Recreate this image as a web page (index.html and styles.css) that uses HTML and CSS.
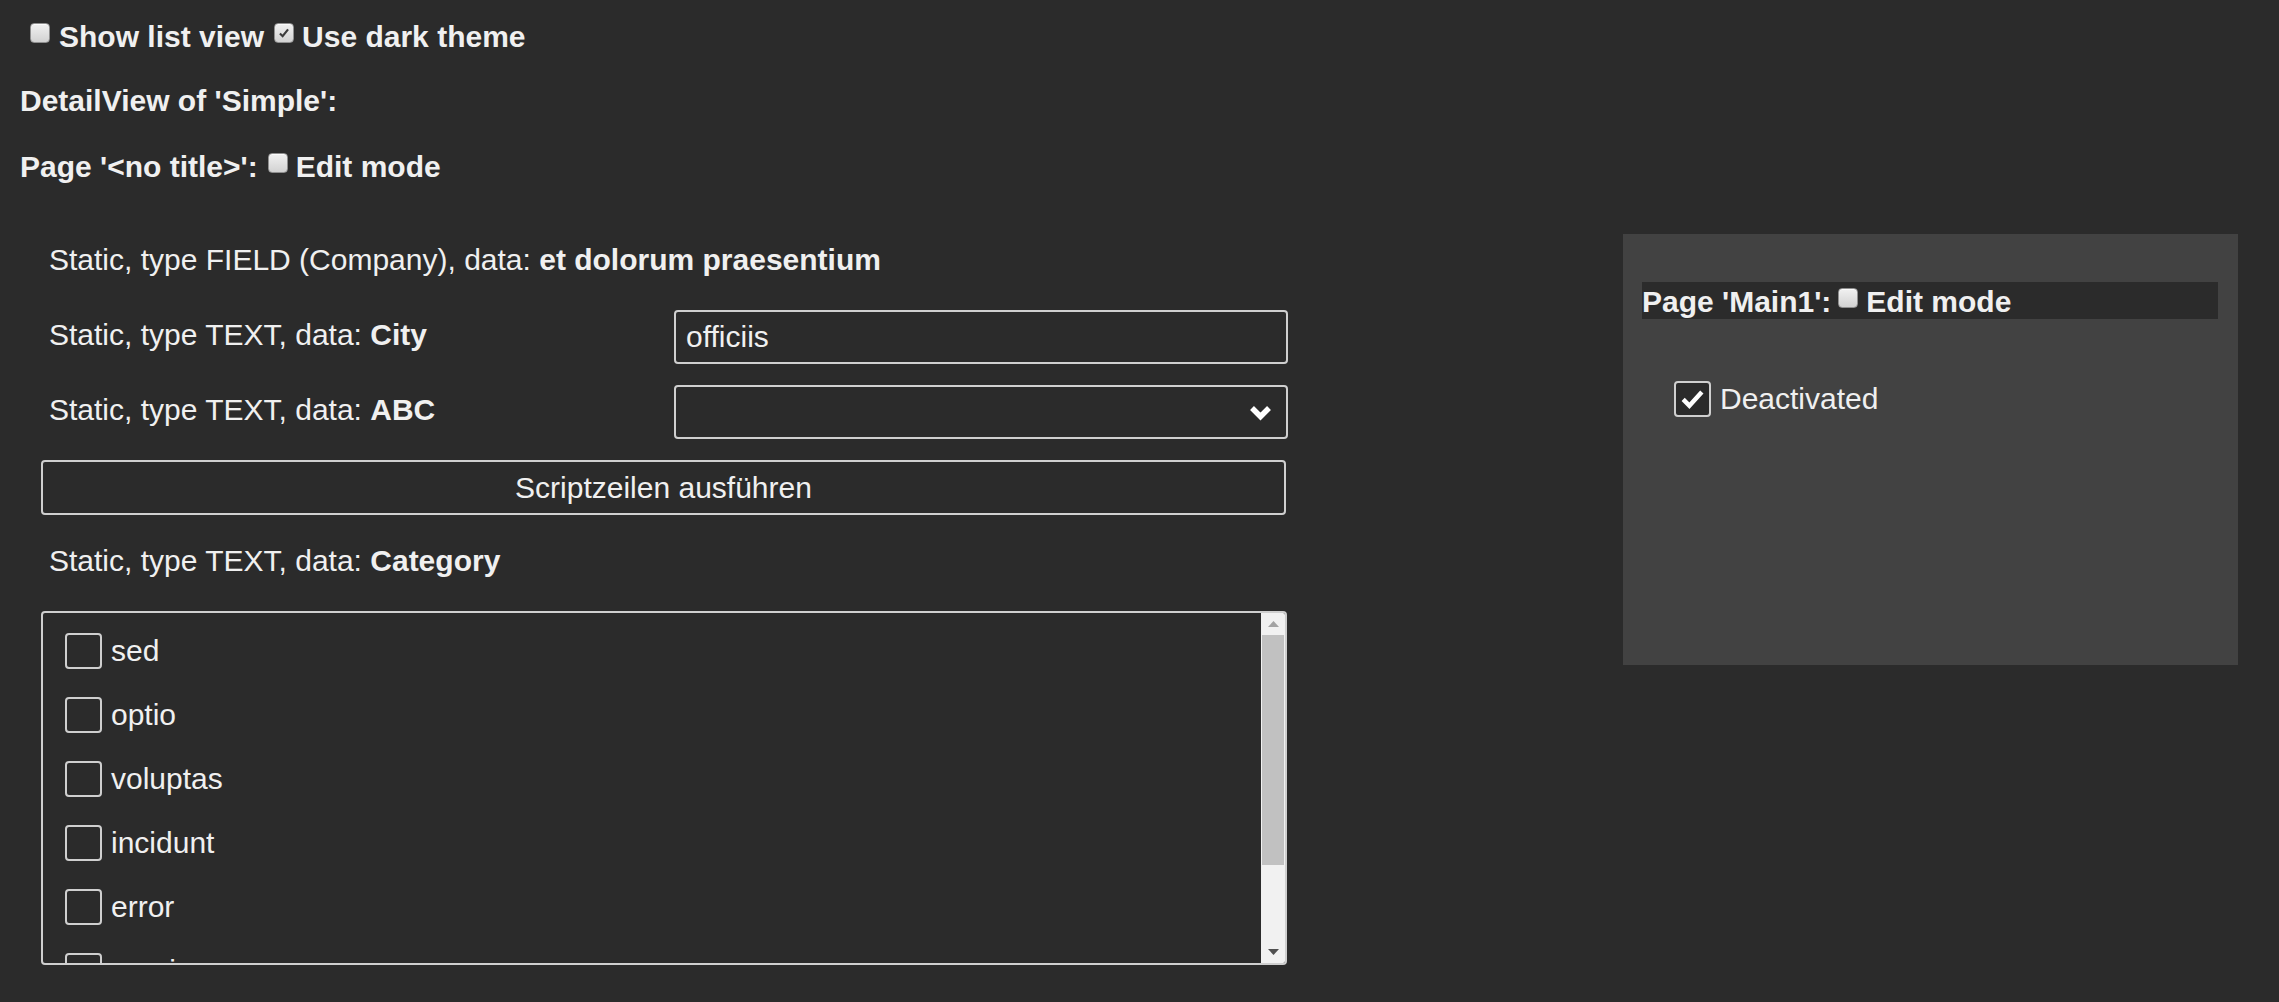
FILE: index.html
```html
<!DOCTYPE html>
<html lang="de">
<head>
<meta charset="utf-8">
<title>DetailView</title>
<link rel="stylesheet" href="styles.css">
</head>
<body>
<div class="toolbar">
  <label class="opt first"><span class="ncb"></span>Show list view</label><label class="opt second"><span class="ncb"><svg class="ncheck" viewBox="0 0 20 20"><path d="M5.5 10.5 L8.5 13.5 L14.5 6" /></svg></span>Use dark theme</label>
</div>
<h1 class="title">DetailView of 'Simple':</h1>
<h2 class="pagehead">Page '&lt;no title&gt;':<label class="opt inhead"><span class="ncb"></span>Edit mode</label></h2>

<div class="main">
  <div class="detail">
    <div class="row">
      <div class="lbl span">Static, type FIELD (Company), data: <b>et dolorum praesentium</b></div>
    </div>
    <div class="row">
      <div class="lbl">Static, type TEXT, data: <b>City</b></div>
      <input class="textin" type="text" value="officiis">
    </div>
    <div class="row">
      <div class="lbl">Static, type TEXT, data: <b>ABC</b></div>
      <div class="select">
        <svg class="chev" viewBox="0 0 23 17"><path d="M3 4 L11.5 12.5 L20 4" /></svg>
      </div>
    </div>
    <button class="runbtn" type="button">Scriptzeilen ausführen</button>
    <div class="row">
      <div class="lbl">Static, type TEXT, data: <b>Category</b></div>
    </div>
    <div class="listbox">
      <div class="items">
        <div class="item"><span class="lcb"></span>sed</div>
        <div class="item"><span class="lcb"></span>optio</div>
        <div class="item"><span class="lcb"></span>voluptas</div>
        <div class="item"><span class="lcb"></span>incidunt</div>
        <div class="item"><span class="lcb"></span>error</div>
        <div class="item"><span class="lcb"></span>omnis</div>
        <div class="item"><span class="lcb"></span>quia</div>
      </div>
      <div class="sbar">
        <div class="sbtn"><svg class="arrow" viewBox="0 0 11 6"><polygon points="0,6 5.5,0 11,6" fill="#a3a3a3"/></svg></div>
        <div class="thumb"></div>
        <div class="strack"></div>
        <div class="sbtn"><svg class="arrow" viewBox="0 0 11 6"><polygon points="0,0 11,0 5.5,6" fill="#505050"/></svg></div>
      </div>
    </div>
  </div>

  <div class="panel">
    <div class="panelhead">Page 'Main1':<label class="opt inpanel"><span class="ncb"></span>Edit mode</label></div>
    <div class="deact">
      <span class="bigcb"><svg viewBox="0 0 37 36"><path d="M8 18.5 L15 25.5 L29 10" /></svg></span>Deactivated
    </div>
  </div>
</div>
</body>
</html>
```

FILE: styles.css
```css
html, body {
  margin: 0;
  padding: 0;
}
body {
  background: #2b2b2b;
  color: #f0f0f0;
  font-family: "Liberation Sans", Arial, sans-serif;
  font-size: 30px;
  line-height: 34px;
  height: 1002px;
  overflow: hidden;
}

/* top options */
.toolbar {
  padding: 20px 0 0 20px;
  height: 34px;
  font-weight: bold;
  white-space: nowrap;
}
.opt {
  display: inline;
}
.opt.first .ncb { margin-left: 10px; margin-right: 9px; }
.opt.second .ncb { margin-left: 10px; }
.opt.inhead .ncb { margin-left: 10px; }
.opt.inpanel .ncb { margin-left: 7px; }

.ncb {
  display: inline-block;
  position: relative;
  width: 20px;
  height: 20px;
  box-sizing: border-box;
  margin: 0 8px 4px 0;
  vertical-align: baseline;
  border: 1px solid #8f8f8f;
  border-radius: 4px;
  background: linear-gradient(#f1f1f1, #d2d2d2);
  box-shadow: inset 0 1px 0 #fbfbfb;
}
.ncheck {
  display: block;
  width: 18px;
  height: 18px;
}
.ncheck path {
  fill: none;
  stroke: #3c3c3c;
  stroke-width: 2.4;
}

.title {
  margin: 30px 0 0 0;
  padding-left: 20px;
  font-size: 30px;
  line-height: 34px;
  font-weight: bold;
}
.pagehead {
  margin: 32px 0 0 0;
  padding-left: 20px;
  font-size: 30px;
  line-height: 34px;
  font-weight: bold;
  white-space: nowrap;
}

/* main area */
.main {
  display: flex;
  align-items: flex-start;
  margin-top: 50px;
  padding: 0 41px;
}
.detail {
  width: 1247px;
  padding-top: 1px;
  display: flex;
  flex-direction: column;
  gap: 21px;
}
.row {
  display: grid;
  grid-template-columns: 633px 1fr;
  height: 54px;
}
.lbl {
  padding: 8px 0 0 8px;
  white-space: nowrap;
}
.lbl.span {
  grid-column: 1 / -1;
}
.lbl b {
  font-weight: bold;
}

.textin {
  box-sizing: border-box;
  height: 54px;
  width: 100%;
  margin: 0;
  border: 2px solid #cfcfcf;
  border-radius: 4px;
  background: #2b2b2b;
  color: #f0f0f0;
  font-family: "Liberation Sans", Arial, sans-serif;
  font-size: 30px;
  padding: 0 10px;
  outline: none;
}
.select {
  box-sizing: border-box;
  height: 54px;
  border: 2px solid #cfcfcf;
  border-radius: 4px;
  display: flex;
  align-items: center;
  justify-content: flex-end;
  padding-right: 14px;
}
.chev {
  width: 23px;
  height: 17px;
  display: block;
}
.chev path {
  fill: none;
  stroke: #ffffff;
  stroke-width: 5.5;
  stroke-linejoin: miter;
}

.runbtn {
  box-sizing: border-box;
  width: 1245px;
  height: 55px;
  margin: 0;
  border: 2px solid #cfcfcf;
  border-radius: 4px;
  background: #2b2b2b;
  color: #f0f0f0;
  font-family: "Liberation Sans", Arial, sans-serif;
  font-size: 30px;
  line-height: 34px;
  padding: 0;
}

/* listbox */
.listbox {
  box-sizing: border-box;
  height: 354px;
  width: 1246px;
  border: 2px solid #cfcfcf;
  border-radius: 4px;
  display: flex;
  overflow: hidden;
}
.items {
  flex: 1;
  padding: 6px 0 0 22px;
  overflow: hidden;
}
.item {
  height: 64px;
  display: flex;
  align-items: center;
}
.lcb {
  box-sizing: border-box;
  width: 37px;
  height: 36px;
  border: 2px solid #cfcfcf;
  border-radius: 4px;
  margin-right: 9px;
  flex: none;
}
.sbar {
  width: 24px;
  flex: none;
  background: #f1f1f1;
  display: flex;
  flex-direction: column;
}
.sbtn {
  height: 22px;
  display: flex;
  align-items: center;
  justify-content: center;
  flex: none;
}
.arrow {
  width: 11px;
  height: 6px;
  display: block;
}
.thumb {
  height: 230px;
  margin: 0 1px 0 1px;
  background: #c1c1c1;
  flex: none;
}
.strack {
  flex: 1;
}

/* right panel */
.panel {
  box-sizing: border-box;
  width: 615px;
  height: 431px;
  margin-left: auto;
  background: #424242;
  padding: 48px 20px 0 19px;
}
.panelhead {
  box-sizing: border-box;
  height: 37px;
  padding-top: 3px;
  background: #2b2b2b;
  font-weight: bold;
  line-height: 34px;
  white-space: nowrap;
}
.deact {
  margin-top: 62px;
  padding-left: 32px;
  height: 36px;
  display: flex;
  align-items: center;
}
.bigcb {
  box-sizing: border-box;
  width: 37px;
  height: 36px;
  border: 2px solid #cfcfcf;
  border-radius: 4px;
  background: #2b2b2b;
  margin-right: 9px;
  flex: none;
}
.bigcb svg {
  display: block;
  width: 33px;
  height: 32px;
}
.bigcb path {
  fill: none;
  stroke: #ffffff;
  stroke-width: 5;
}
```
